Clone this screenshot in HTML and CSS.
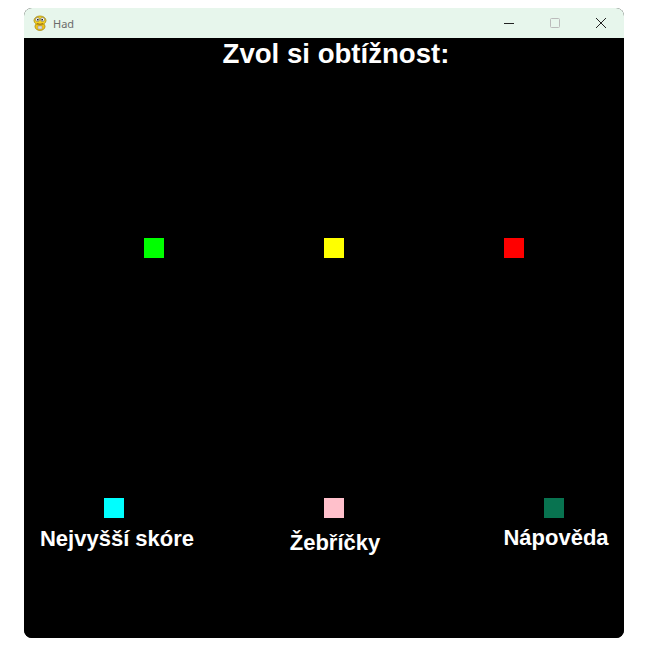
FILE: index.html
```html
<!DOCTYPE html>
<html lang="cs">
<head>
<meta charset="utf-8">
<title>Had</title>
<link rel="stylesheet" href="styles.css">
</head>
<body>
<div class="window">
  <div class="titlebar">
    <svg class="app-icon" width="16" height="16" viewBox="0 0 16 16">
      <ellipse cx="8" cy="11.5" rx="5" ry="4" fill="#f0c419" stroke="#a88a10" stroke-width="0.8"/>
      <ellipse cx="8" cy="5.5" rx="6" ry="4.5" fill="#f5d222" stroke="#a88a10" stroke-width="0.8"/>
      <circle cx="5.5" cy="4.5" r="2" fill="#fff" stroke="#555" stroke-width="0.5"/>
      <circle cx="10.5" cy="4.5" r="2" fill="#fff" stroke="#555" stroke-width="0.5"/>
      <circle cx="5.8" cy="4.7" r="0.9" fill="#222"/>
      <circle cx="10.2" cy="4.7" r="0.9" fill="#222"/>
      <path d="M5 8.5 Q8 10 11 8.5" fill="none" stroke="#8a5a10" stroke-width="0.8"/>
      <rect x="6" y="11" width="4" height="3" fill="#ddd" stroke="#888" stroke-width="0.4"/>
    </svg>
    <span class="app-name">Had</span>
    <div class="controls">
      <svg class="ctl" width="46" height="30" viewBox="0 0 46 30"><line x1="18" y1="15.5" x2="28" y2="15.5" stroke="#222" stroke-width="1"/></svg>
      <svg class="ctl" width="46" height="30" viewBox="0 0 46 30"><rect x="18.5" y="10.5" width="9" height="9" rx="1" fill="none" stroke="#bbb" stroke-width="1"/></svg>
      <svg class="ctl" width="46" height="30" viewBox="0 0 46 30"><path d="M18 10 L28 20 M28 10 L18 20" stroke="#222" stroke-width="1"/></svg>
    </div>
  </div>
  <div class="canvas">
    <h1 class="heading">Zvol si obtížnost:</h1>
    <div class="levels">
      <span class="sq green"></span>
      <span class="sq yellow"></span>
      <span class="sq red"></span>
    </div>
    <div class="menu">
      <div class="item"><span class="sq cyan"></span><span class="label l1">Nejvyšší skóre</span></div>
      <div class="item"><span class="sq pink"></span><span class="label l2">Žebříčky</span></div>
      <div class="item"><span class="sq teal"></span><span class="label l3">Nápověda</span></div>
    </div>
  </div>
</div>
</body>
</html>
```

FILE: styles.css
```css
html, body {
  margin: 0;
  padding: 0;
  background: #ffffff;
}
body {
  padding: 8px 0 0 24px;
}
.window {
  width: 600px;
  border-radius: 8px;
  overflow: hidden;
  background: #000;
}
.titlebar {
  height: 30px;
  background: #e7f6ec;
  display: flex;
  align-items: center;
}
.app-icon {
  margin-left: 8px;
  flex: none;
}
.app-name {
  margin-left: 5px;
  font-family: "Noto Sans", sans-serif;
  font-size: 11px;
  color: #6b6b6b;
}
.controls {
  margin-left: auto;
  display: flex;
}
.ctl {
  display: block;
}
.canvas {
  height: 600px;
  background: #000;
  font-family: "Liberation Sans", Arial, sans-serif;
  font-weight: bold;
  color: #fff;
}
.heading {
  margin: 0;
  padding-left: 24px;
  font-size: 27.6px;
  line-height: 32px;
  text-align: center;
  font-weight: bold;
}
.levels {
  display: flex;
  gap: 160px;
  padding-left: 120px;
  margin-top: 168px;
}
.sq {
  display: block;
  width: 20px;
  height: 20px;
}
.green { background: #00ff00; }
.yellow { background: #ffff00; }
.red { background: #ff0000; }
.cyan { background: #00ffff; }
.pink { background: #ffc0cb; }
.teal { background: #087350; }
.menu {
  display: flex;
  gap: 80px;
  padding-left: 20px;
  margin-top: 240px;
}
.item {
  width: 140px;
  display: flex;
  flex-direction: column;
  align-items: center;
}
.label {
  font-size: 22px;
  line-height: 25px;
  margin-top: 8px;
  white-space: nowrap;
}
.l1 { padding-left: 6px; }
.l2 { padding-left: 2px; margin-top: 12px; }
.l3 { padding-left: 4px; margin-top: 7px; }
```
